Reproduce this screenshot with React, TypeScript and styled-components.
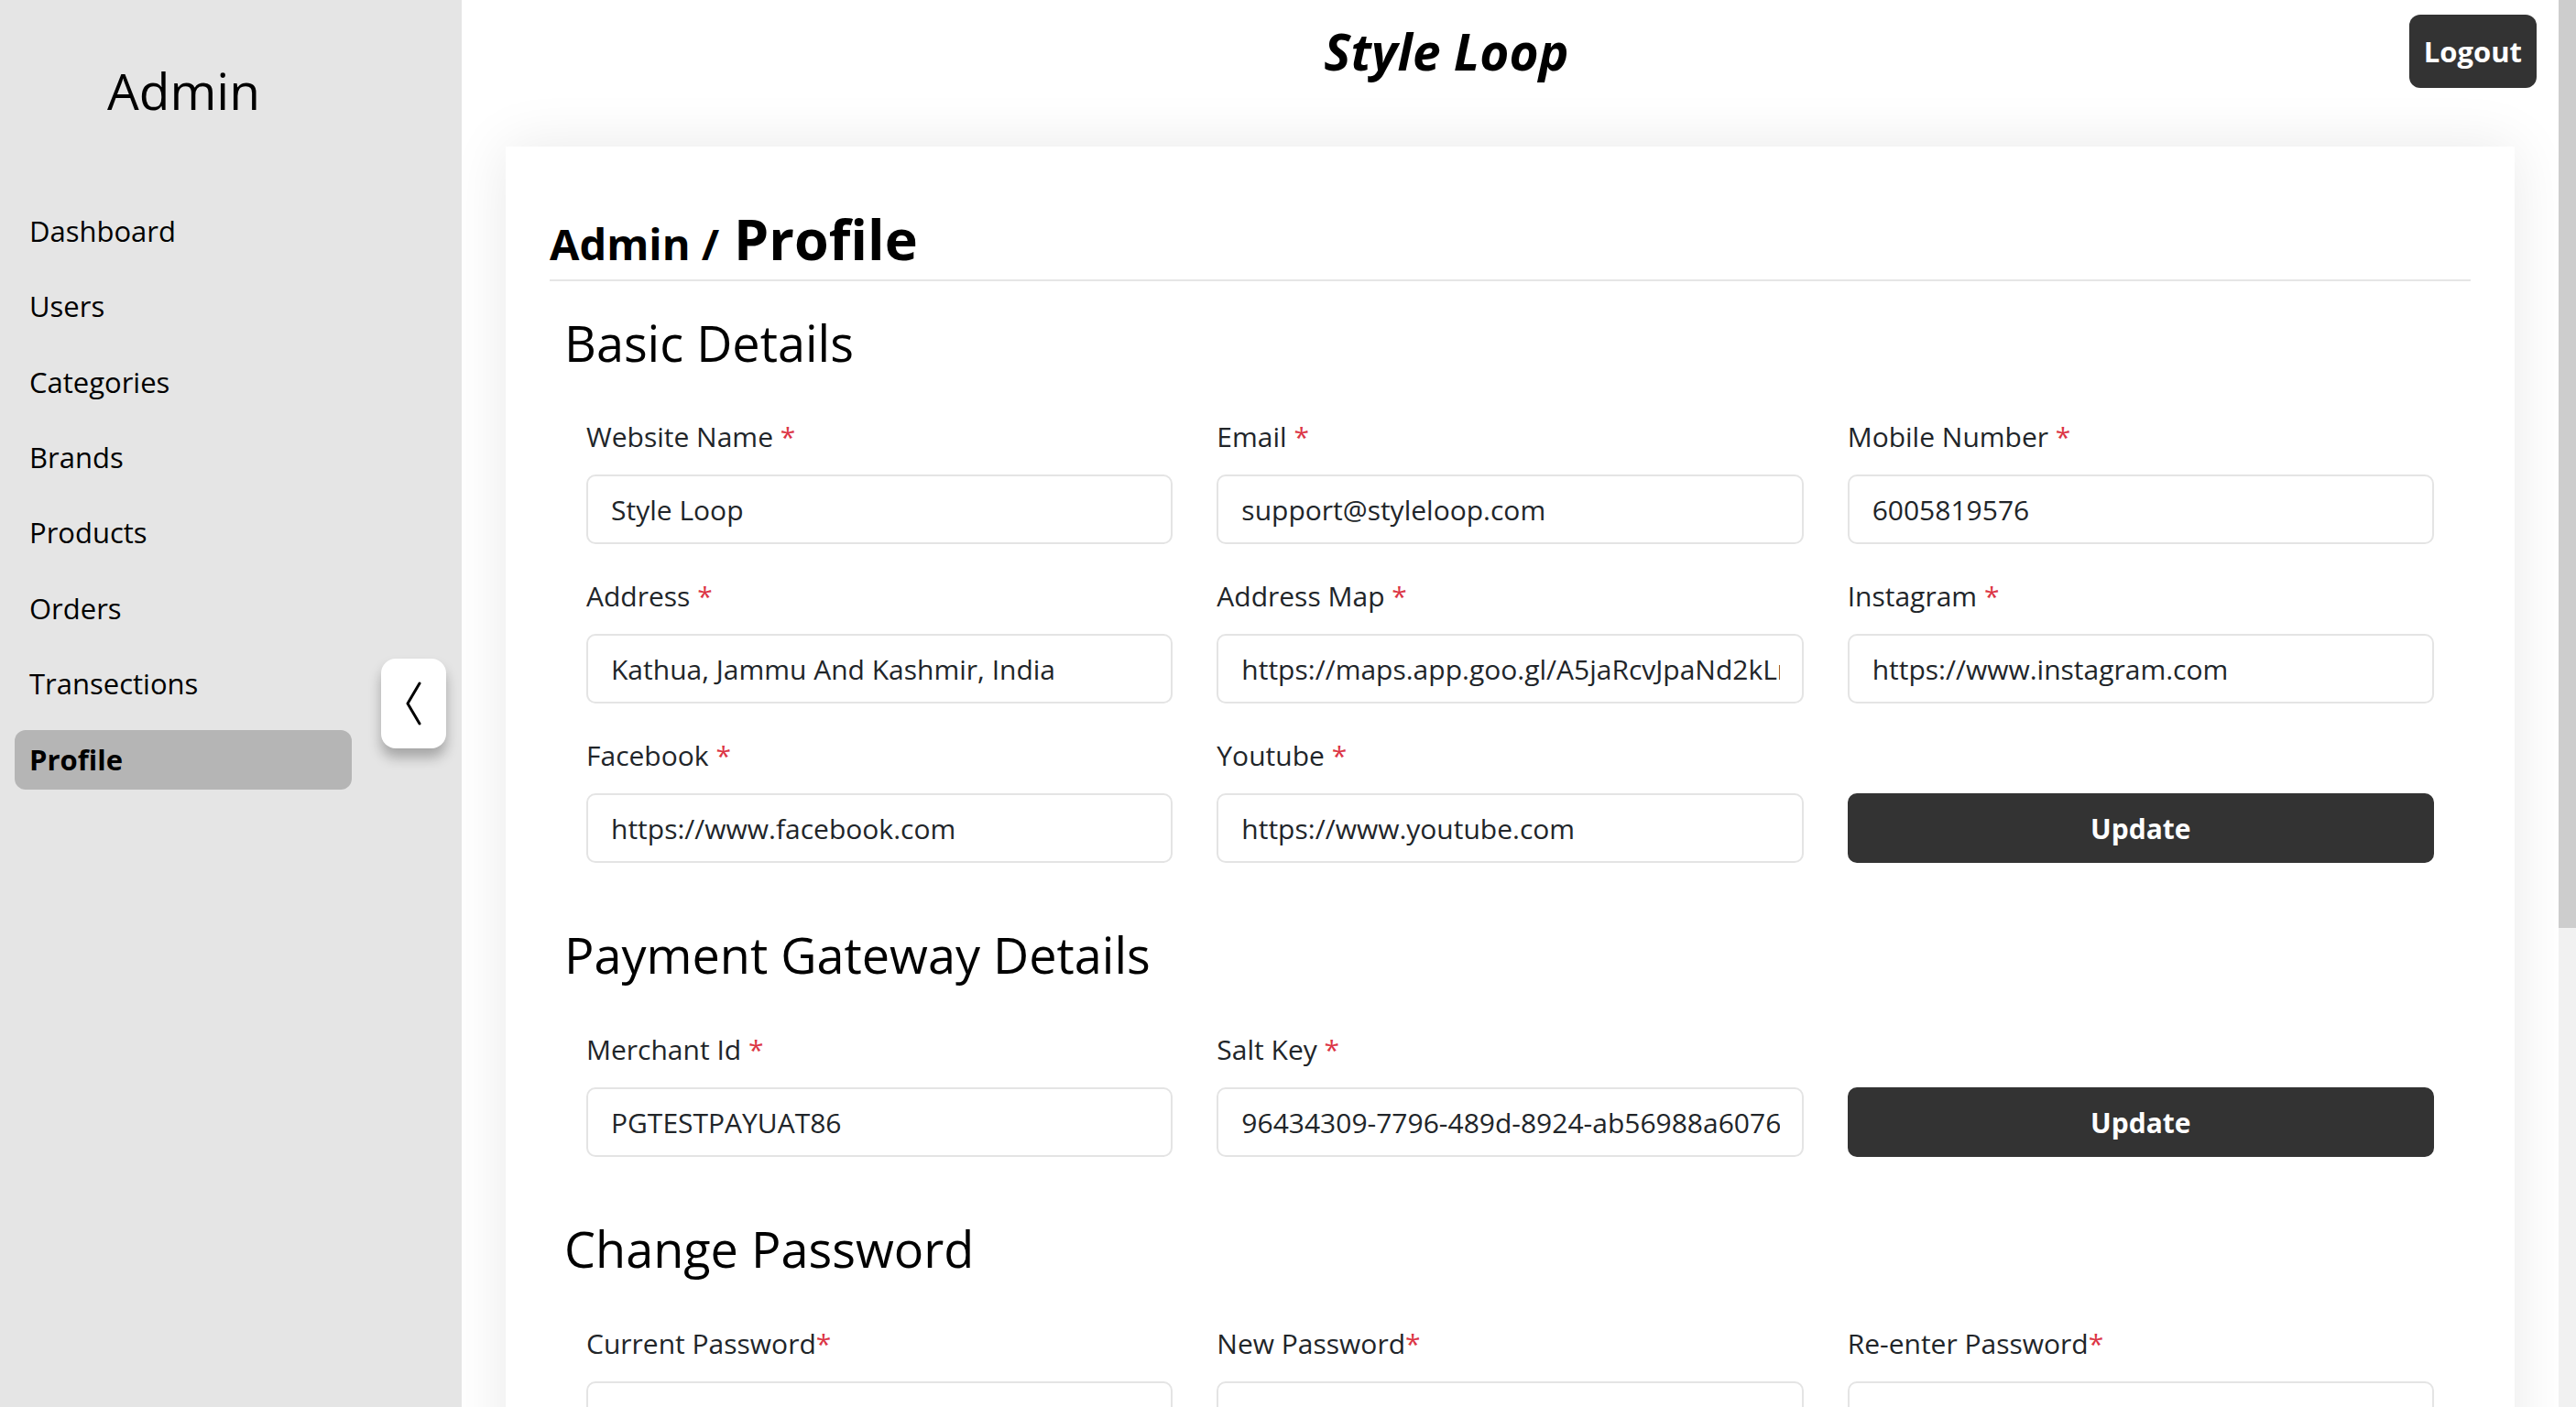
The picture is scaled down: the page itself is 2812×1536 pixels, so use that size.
import React from "react";
import styled, { createGlobalStyle } from "styled-components";

const GlobalStyle = createGlobalStyle`
  * { box-sizing: border-box; }
  html, body { margin: 0; padding: 0; height: 100%; overflow: hidden; }
  body {
    font-family: "Open Sans", "Noto Sans", sans-serif;
    color: #212529;
    background: #ffffff;
  }
  #root { height: 100%; }
`;

const Layout = styled.div`
  position: relative;
  display: flex;
  height: 100vh;
`;

const Sidebar = styled.aside`
  width: 504px;
  flex-shrink: 0;
  background: #e5e5e5;
  padding-top: 66px;
`;

const Brand = styled.div`
  padding-left: 117px;
  font-size: 55px;
  font-weight: 500;
  line-height: 66px;
  color: #000;
`;

const Nav = styled.nav`
  margin: 88px 0 0 16px;
  width: 368px;
  display: flex;
  flex-direction: column;
  gap: 17.4px;
`;

const NavItem = styled.a<{ $active?: boolean }>`
  height: 65px;
  display: flex;
  align-items: center;
  padding-left: 16px;
  border-radius: 12px;
  font-size: 31px;
  line-height: 1.2;
  color: #000;
  text-decoration: none;
  font-weight: ${(p) => (p.$active ? 700 : 400)};
  background: ${(p) => (p.$active ? "#b5b5b5" : "transparent")};
`;

const ToggleButton = styled.button`
  position: absolute;
  left: 416px;
  top: 719px;
  width: 71px;
  height: 98px;
  padding: 0;
  border: none;
  border-radius: 16px;
  background: #fff;
  box-shadow: 0 10px 14px rgba(0, 0, 0, 0.28);
  display: flex;
  align-items: center;
  justify-content: center;
`;

const Main = styled.main`
  flex: 1;
  min-width: 0;
  height: 100vh;
  overflow: hidden;
  background: #fff;
`;

const ScrollTrack = styled.div`
  width: 19px;
  flex-shrink: 0;
  height: 100vh;
  background: #f1f1f1;
  display: flex;
  flex-direction: column;
`;

const ScrollThumb = styled.div`
  height: 1013px;
  background: #cdcdcd;
`;

const Header = styled.header`
  height: 112px;
  display: flex;
  align-items: center;
  padding: 0 24px;
`;

const SiteTitle = styled.h1`
  flex: 1;
  margin: 0;
  text-align: center;
  font-size: 55px;
  font-weight: 700;
  font-style: italic;
  line-height: 1.2;
  color: #000;
`;

const LogoutButton = styled.button`
  height: 80px;
  padding: 0 16px;
  border: none;
  border-radius: 12px;
  background: #333;
  color: #fff;
  font-family: inherit;
  font-size: 31px;
  font-weight: 700;
`;

const Card = styled.section`
  margin: 48px 48px 60px;
  background: #fff;
  box-shadow: 0 0 60px rgba(0, 0, 0, 0.09);
  padding: 66px 48px 60px;
`;

const PageHeading = styled.h2`
  margin: 0 0 35px;
  padding-bottom: 9px;
  border-bottom: 2px solid #e6e6e6;
  font-size: 61px;
  font-weight: 700;
  line-height: 69.6px;
  color: #000;
`;

const Crumb = styled.span`
  font-size: 47px;
  line-height: 1;
`;

const Section = styled.div`
  padding: 0 16px;
  margin-bottom: 68px;
`;

const SectionTitle = styled.h3`
  margin: 0 0 48px;
  font-size: 54px;
  font-weight: 500;
  line-height: 1.2;
  color: #000;
`;

const FieldGrid = styled.div`
  display: grid;
  grid-template-columns: repeat(3, 1fr);
  column-gap: 48px;
  row-gap: 34px;
  padding: 0 24px;
`;

const Field = styled.div`
  display: flex;
  flex-direction: column;
  justify-content: flex-end;
  min-width: 0;
`;

const Label = styled.label`
  font-size: 30px;
  line-height: 45px;
  margin-bottom: 19px;
  color: #212529;
`;

const Required = styled.span`
  color: #dc3545;
`;

const TextInput = styled.input`
  height: 76px;
  width: 100%;
  border: 2px solid #e4e4e4;
  border-radius: 10px;
  padding: 0 24px 0 25px;
  font-family: inherit;
  font-size: 30px;
  color: #212529;
  background: #fff;
  outline: none;
`;

const UpdateButton = styled.button`
  height: 76px;
  width: 100%;
  border: none;
  border-radius: 10px;
  background: #333;
  color: #fff;
  font-family: inherit;
  font-size: 30px;
  font-weight: 700;
`;

type FieldDef = { label: string; value?: string; tight?: boolean; type?: string };

const FormField = ({ label, value, tight, type }: FieldDef) => (
  <Field>
    <Label>
      {label}
      {tight ? "" : " "}
      <Required>*</Required>
    </Label>
    <TextInput type={type || "text"} defaultValue={value} />
  </Field>
);

const navItems = [
  "Dashboard",
  "Users",
  "Categories",
  "Brands",
  "Products",
  "Orders",
  "Transections",
  "Profile",
];

export default function App() {
  return (
    <>
      <GlobalStyle />
      <Layout>
        <Sidebar>
          <Brand>Admin</Brand>
          <Nav>
            {navItems.map((n) => (
              <NavItem key={n} $active={n === "Profile"}>
                {n}
              </NavItem>
            ))}
          </Nav>
        </Sidebar>
        <ToggleButton aria-label="Collapse sidebar">
          <svg width="18" height="48" viewBox="0 0 18 48">
            <polyline
              points="15,2 2,24 15,46"
              fill="none"
              stroke="#000"
              strokeWidth="3"
              strokeLinecap="round"
              strokeLinejoin="round"
            />
          </svg>
        </ToggleButton>
        <Main>
          <Header>
            <SiteTitle>Style Loop</SiteTitle>
            <LogoutButton>Logout</LogoutButton>
          </Header>
          <Card>
            <PageHeading>
              <Crumb>Admin /</Crumb> Profile
            </PageHeading>

            <Section>
              <SectionTitle>Basic Details</SectionTitle>
              <FieldGrid>
                <FormField label="Website Name" value="Style Loop" />
                <FormField label="Email" value="support@styleloop.com" />
                <FormField label="Mobile Number" value="6005819576" />
                <FormField label="Address" value="Kathua, Jammu And Kashmir, India" />
                <FormField
                  label="Address Map"
                  value="https://maps.app.goo.gl/A5jaRcvJpaNd2kLm9"
                />
                <FormField label="Instagram" value="https://www.instagram.com" />
                <FormField label="Facebook" value="https://www.facebook.com" />
                <FormField label="Youtube" value="https://www.youtube.com" />
                <Field>
                  <UpdateButton>Update</UpdateButton>
                </Field>
              </FieldGrid>
            </Section>

            <Section>
              <SectionTitle>Payment Gateway Details</SectionTitle>
              <FieldGrid>
                <FormField label="Merchant Id" value="PGTESTPAYUAT86" />
                <FormField
                  label="Salt Key"
                  value="96434309-7796-489d-8924-ab56988a6076"
                />
                <Field>
                  <UpdateButton>Update</UpdateButton>
                </Field>
              </FieldGrid>
            </Section>

            <Section>
              <SectionTitle>Change Password</SectionTitle>
              <FieldGrid>
                <FormField label="Current Password" tight type="password" />
                <FormField label="New Password" tight type="password" />
                <FormField label="Re-enter Password" tight type="password" />
                <Field>
                  <UpdateButton>Update</UpdateButton>
                </Field>
              </FieldGrid>
            </Section>
          </Card>
        </Main>
        <ScrollTrack>
          <ScrollThumb />
        </ScrollTrack>
      </Layout>
    </>
  );
}
